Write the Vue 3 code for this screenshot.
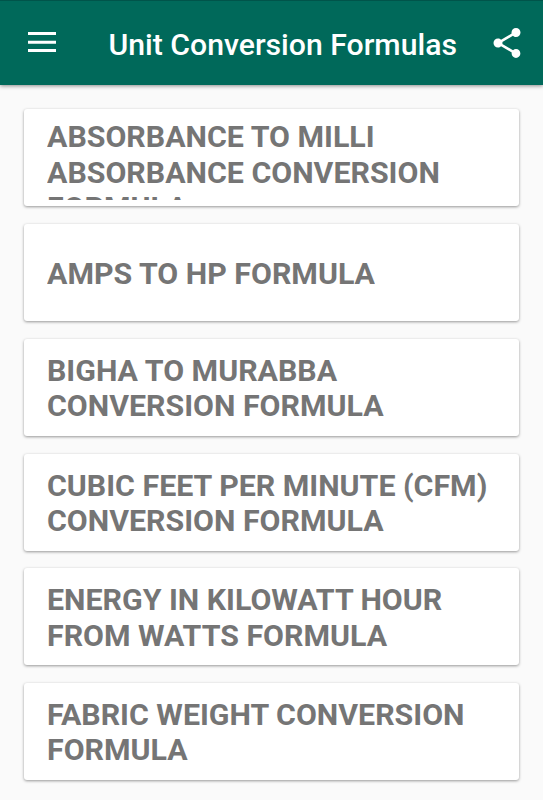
<template>
  <div class="screen">
    <header class="app-bar">
      <button class="icon-btn menu" aria-label="Menu">
        <svg width="28" height="20" viewBox="0 0 28 20">
          <path d="M0 0h28v3H0zM0 8.8h28v3H0zM0 17h28v3H0z" fill="#fff" />
        </svg>
      </button>
      <h1 class="title">Unit Conversion Formulas</h1>
      <button class="icon-btn" aria-label="Share">
        <svg width="36" height="36" viewBox="0 0 24 24">
          <path fill="#fff" d="M18 16.08c-.76 0-1.44.3-1.96.77L8.91 12.7c.05-.23.09-.46.09-.7s-.04-.47-.09-.7l7.05-4.11c.54.5 1.25.81 2.04.81 1.66 0 3-1.34 3-3s-1.34-3-3-3-3 1.34-3 3c0 .24.04.47.09.7L8.04 9.81C7.5 9.31 6.79 9 6 9c-1.66 0-3 1.34-3 3s1.34 3 3 3c.79 0 1.5-.31 2.04-.81l7.12 4.16c-.05.21-.08.43-.08.65 0 1.61 1.31 2.92 2.92 2.92s2.92-1.31 2.92-2.92-1.31-2.92-2.92-2.92z" />
        </svg>
      </button>
    </header>
    <main class="list">
      <div v-for="f in formulas" :key="f[0]" class="card">
        <div class="label" :class="{ clipped: f.length > 2 }">
          <span v-for="line in f" :key="line" class="line">{{ line }}</span>
        </div>
      </div>
    </main>
  </div>
</template>

<script setup>
const formulas = [
  ['ABSORBANCE TO MILLI', 'ABSORBANCE CONVERSION', 'FORMULA'],
  ['AMPS TO HP FORMULA'],
  ['BIGHA TO MURABBA', 'CONVERSION FORMULA'],
  ['CUBIC FEET PER MINUTE (CFM)', 'CONVERSION FORMULA'],
  ['ENERGY IN KILOWATT HOUR', 'FROM WATTS FORMULA'],
  ['FABRIC WEIGHT CONVERSION', 'FORMULA'],
]
</script>

<style>
body { background: #fafafa; }
</style>

<style scoped>
.screen {
  height: 800px; overflow: hidden; background: #fafafa;
  font-family: Roboto, sans-serif;
}
.app-bar {
  display: flex; align-items: center; box-sizing: border-box;
  height: 85px; padding: 0 18px 0 28px;
  background: #00695a; color: #fff; border-top: 1px solid #00544a;
  box-shadow: 0 1px 4px rgba(0,0,0,.45);
}
.icon-btn { display: flex; padding: 0; border: 0; background: none; }
.menu { margin-top: -2px; }
.title {
  flex: 1; margin: 3px 0 0 52.5px;
  font-size: 30.2px; font-weight: 500; line-height: 36px; white-space: nowrap;
}
.list { display: flex; flex-direction: column; gap: 17.8px; padding: 24.2px 24px 0; }
.card {
  display: flex; align-items: center; box-sizing: border-box; flex-shrink: 0;
  height: 97px; padding: 7.5px 23px 6px; border-radius: 3px;
  background: #fff; color: #757575;
  box-shadow: 0 1px 3px rgba(0,0,0,.4);
}
.label {
  box-sizing: border-box; max-height: 83px; overflow: hidden;
  font-size: 30.35px; font-weight: 700; line-height: 35.3px; white-space: nowrap;
}
/* three-line names run past the card and are cut at its padding */
.label.clipped { padding-top: 2.5px; }
.line { display: block; }
</style>
